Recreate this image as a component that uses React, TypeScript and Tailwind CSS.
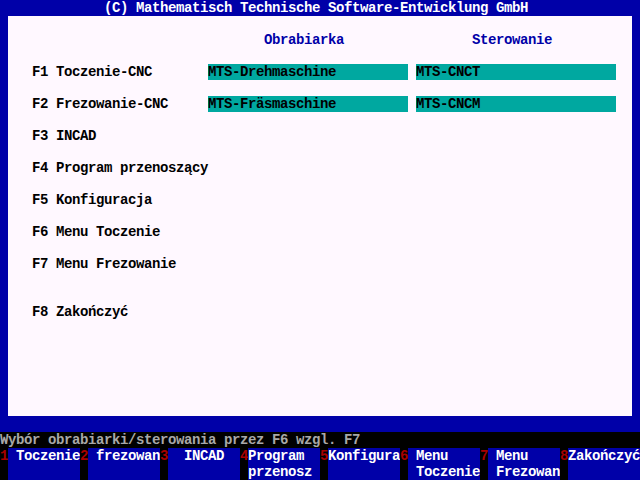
import React from "react";

const items: { row: number; label: string; a?: string; b?: string }[] = [
  { row: 4, label: "F1 Toczenie-CNC", a: "MTS-Drehmaschine", b: "MTS-CNCT" },
  { row: 6, label: "F2 Frezowanie-CNC", a: "MTS-Fräsmaschine", b: "MTS-CNCM" },
  { row: 8, label: "F3 INCAD" },
  { row: 10, label: "F4 Program przenoszący" },
  { row: 12, label: "F5 Konfiguracja" },
  { row: 14, label: "F6 Menu Toczenie" },
  { row: 16, label: "F7 Menu Frezowanie" },
  { row: 19, label: "F8 Zakończyć" },
];

const keys: { n: string; l1: string; l2: string }[] = [
  { n: "1", l1: " Toczenie", l2: "" },
  { n: "2", l1: " frezowan", l2: "" },
  { n: "3", l1: "  INCAD", l2: "" },
  { n: "4", l1: "Program", l2: "przenosz" },
  { n: "5", l1: "Konfigura", l2: "" },
  { n: "6", l1: " Menu", l2: " Toczenie" },
  { n: "7", l1: " Menu", l2: " Frezowan" },
  { n: "8", l1: "Zakończyć", l2: "" },
];

export default function App() {
  const panelRows: React.ReactNode[] = [];
  for (let r = 1; r <= 25; r++) {
    const it = items.find((i) => i.row === r);
    if (r === 2) {
      panelRows.push(
        <div key={r} className="h-4 flex text-[#0000a8]">
          <div className="w-[256px] shrink-0" />
          <div className="w-[208px] shrink-0">Obrabiarka</div>
          <div>Sterowanie</div>
        </div>
      );
    } else if (it) {
      panelRows.push(
        <div key={r} className="h-4 flex text-black">
          <div className="w-[24px] shrink-0" />
          <div className="w-[176px] shrink-0">{it.label}</div>
          {it.a && (
            <>
              <div className="w-[200px] shrink-0 bg-[#00a8a0]">{it.a}</div>
              <div className="w-[8px] shrink-0" />
              <div className="w-[200px] shrink-0 bg-[#00a8a0]">{it.b}</div>
            </>
          )}
        </div>
      );
    } else {
      panelRows.push(<div key={r} className="h-4" />);
    }
  }

  return (
    <div
      className="w-[640px] h-[480px] bg-[#0000a8] flex flex-col overflow-hidden whitespace-pre font-bold text-[14px] tracking-[-0.4px] leading-4"
      style={{ fontFamily: '"Liberation Mono", "DejaVu Sans Mono", monospace' }}
    >
      <div className="h-4 text-white pl-[104px]">
        (C) Mathematisch Technische Software-Entwicklung GmbH
      </div>
      <div className="mx-2 h-[400px] bg-[#fff8ff] flex flex-col">{panelRows}</div>
      <div className="h-4" />
      <div className="h-4 bg-black text-[#a8a8a8]">
        Wybór obrabiarki/sterowania przez F6 wzgl. F7
      </div>
      <div className="h-8 flex">
        {keys.map((k) => (
          <div key={k.n} className="w-[80px] h-8 flex">
            <div className="w-[8px] h-8 bg-black text-[#a80000]">{k.n}</div>
            <div className="w-[72px] h-8 bg-[#0000a8] text-white flex flex-col">
              <div className="h-4">{k.l1}</div>
              <div className="h-4">{k.l2}</div>
            </div>
          </div>
        ))}
      </div>
    </div>
  );
}
